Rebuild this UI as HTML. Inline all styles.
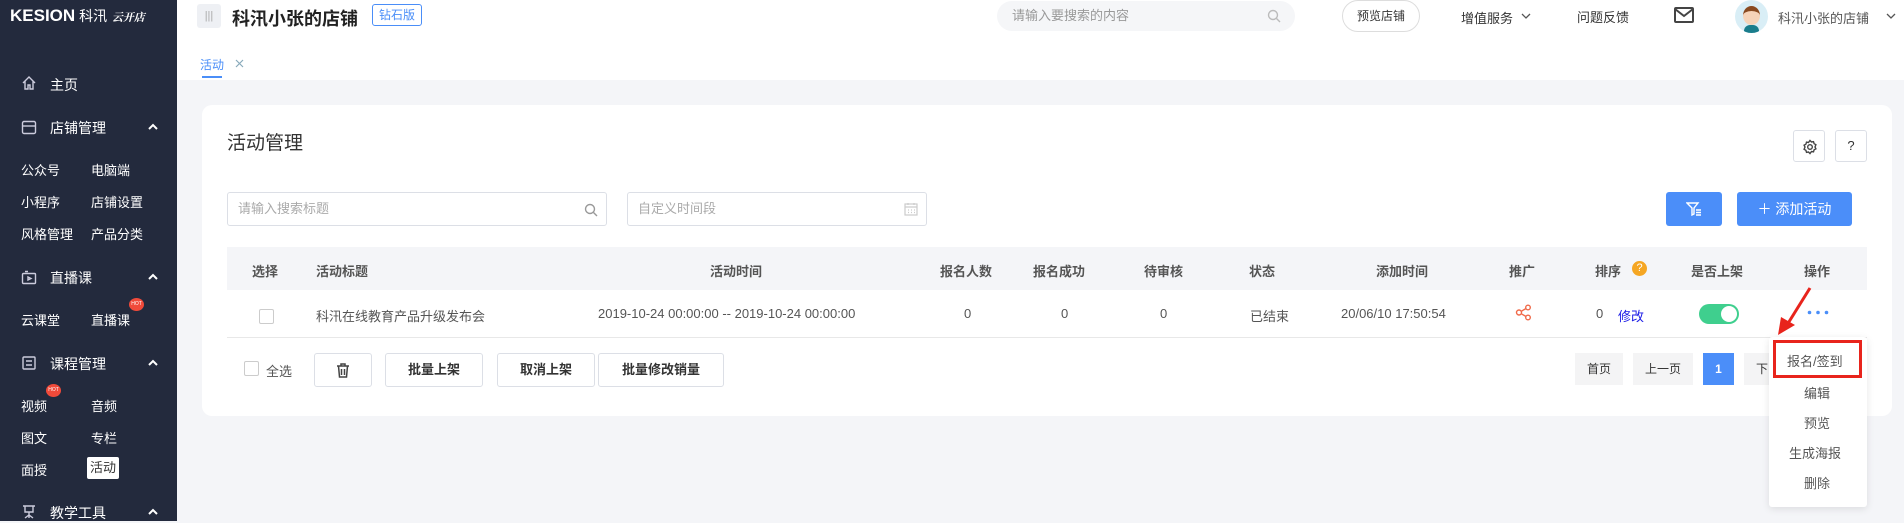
<!DOCTYPE html>
<html><head><meta charset="utf-8"><style>
*{margin:0;padding:0;box-sizing:border-box}
body{width:1904px;height:521px;overflow:hidden;background:#f4f5f8;font-family:"Liberation Sans","Noto Sans CJK SC",sans-serif;font-size:13px;color:#333;position:relative}
.a{position:absolute;white-space:nowrap}
.side{position:absolute;left:0;top:0;width:177px;height:521px;background:#232a3d;color:#fff}
.side .a{color:#fff;font-size:13px}
.hdr{position:absolute;left:177px;top:0;width:1727px;height:45px;background:#fff}
.tabs{position:absolute;left:177px;top:45px;width:1727px;height:35px;background:#fff}
.card{position:absolute;left:202px;top:105px;width:1690px;height:311px;background:#fff;border-radius:10px}
.th{color:#555;font-weight:bold;font-size:13px}
.btn{position:absolute;border:1px solid #dcdfe6;border-radius:3px;background:#fff;text-align:center;font-size:13px;color:#333}
</style></head><body>
<div class="side">
 <div class="a" style="left:10px;top:6px;font-size:17px;font-weight:bold">KESION<span style="font-weight:normal;font-size:14px"> 科汛</span> <span style="font-size:11px;font-style:italic;font-family:'Liberation Serif','Noto Serif CJK SC',serif">云开店</span></div>
 <svg class="a" style="left:21px;top:75px" width="16" height="16" viewBox="0 0 16 16" fill="none" stroke="#ccd" stroke-width="1.4"><path d="M2 8L8 2l6 6M4 6v8h3v-4h2v4h3V6"/></svg>
 <div class="a" style="left:50px;top:75px;font-size:14px">主页</div>
 <svg class="a" style="left:21px;top:120px" width="16" height="15" viewBox="0 0 16 15" fill="none" stroke="#ccd" stroke-width="1.4"><rect x="1.5" y="1.5" width="13" height="12" rx="1.5"/><path d="M1.5 6h13"/></svg>
 <div class="a" style="left:50px;top:118px;font-size:14px">店铺管理</div>
 <svg class="a" style="left:148px;top:123px" width="10" height="7" viewBox="0 0 10 7" fill="none" stroke="#fff" stroke-width="2"><path d="M1 6l4-4 4 4"/></svg>
 <div class="a" style="left:21px;top:160px">公众号</div><div class="a" style="left:91px;top:160px">电脑端</div>
 <div class="a" style="left:21px;top:192px">小程序</div><div class="a" style="left:91px;top:192px">店铺设置</div>
 <div class="a" style="left:21px;top:224px">风格管理</div><div class="a" style="left:91px;top:224px">产品分类</div>
 <svg class="a" style="left:21px;top:270px" width="16" height="15" viewBox="0 0 16 15" fill="none" stroke="#ccd" stroke-width="1.4"><rect x="1.5" y="3.5" width="13" height="10" rx="1"/><path d="M4 1.5h3M7 7l3 1.5L7 10z"/></svg>
 <div class="a" style="left:50px;top:268px;font-size:14px">直播课</div>
 <svg class="a" style="left:148px;top:273px" width="10" height="7" viewBox="0 0 10 7" fill="none" stroke="#fff" stroke-width="2"><path d="M1 6l4-4 4 4"/></svg>
 <div class="a" style="left:21px;top:310px">云课堂</div><div class="a" style="left:91px;top:310px">直播课</div>
 <div class="a" style="left:129px;top:298px;width:15px;height:13px;border-radius:50%;background:#f04a3a;font-size:5px;text-align:center;line-height:13px">HOT</div>
 <svg class="a" style="left:21px;top:355px" width="16" height="16" viewBox="0 0 16 16" fill="none" stroke="#ccd" stroke-width="1.4"><rect x="2" y="2" width="12" height="12" rx="1"/><path d="M5 6h6M5 10h6"/></svg>
 <div class="a" style="left:50px;top:354px;font-size:14px">课程管理</div>
 <svg class="a" style="left:148px;top:359px" width="10" height="7" viewBox="0 0 10 7" fill="none" stroke="#fff" stroke-width="2"><path d="M1 6l4-4 4 4"/></svg>
 <div class="a" style="left:21px;top:396px">视频</div><div class="a" style="left:91px;top:396px">音频</div>
 <div class="a" style="left:46px;top:384px;width:15px;height:13px;border-radius:50%;background:#f04a3a;font-size:5px;text-align:center;line-height:13px">HOT</div>
 <div class="a" style="left:21px;top:428px">图文</div><div class="a" style="left:91px;top:428px">专栏</div>
 <div class="a" style="left:21px;top:460px">面授</div>
 <div class="a" style="left:87px;top:457px;width:32px;height:22px;background:#fff;border-radius:2px;color:#333!important;text-align:center;line-height:22px">活动</div>
 <svg class="a" style="left:21px;top:504px" width="16" height="16" viewBox="0 0 16 16" fill="none" stroke="#ccd" stroke-width="1.4"><path d="M2 2h12M4 2v6h8V2M8 8v6M4 14l4-3 4 3"/></svg>
 <div class="a" style="left:50px;top:503px;font-size:14px">教学工具</div>
 <svg class="a" style="left:148px;top:508px" width="10" height="7" viewBox="0 0 10 7" fill="none" stroke="#fff" stroke-width="2"><path d="M1 6l4-4 4 4"/></svg>
</div>
<div class="hdr">
 <div class="a" style="left:20px;top:4px;width:24px;height:24px;background:#eef0f4;border-radius:3px;color:#aaa;font-size:11px;text-align:center;line-height:24px">|||</div>
 <div class="a" style="left:55px;top:5px;font-size:18px;font-weight:bold;color:#222">科汛小张的店铺</div>
 <div class="a" style="left:195px;top:4px;width:50px;height:22px;border:1px solid #4a8ef8;border-radius:3px;color:#4a8ef8;font-size:12px;text-align:center;line-height:20px">钻石版</div>
 <div class="a" style="left:820px;top:1px;width:298px;height:30px;border-radius:15px;background:#f5f6f8;color:#999;line-height:30px;padding-left:15px">请输入要搜索的内容
  <svg style="position:absolute;right:14px;top:8px" width="14" height="14" viewBox="0 0 14 14" fill="none" stroke="#bbb" stroke-width="1.4"><circle cx="6" cy="6" r="4.5"/><path d="M9.5 9.5L13 13"/></svg></div>
 <div class="a" style="left:1165px;top:0px;width:78px;height:32px;border:1px solid #ddd;border-radius:16px;text-align:center;line-height:30px;font-size:12px">预览店铺</div>
 <div class="a" style="left:1284px;top:8px">增值服务</div>
 <svg class="a" style="left:1344px;top:13px" width="10" height="6" viewBox="0 0 10 6" fill="none" stroke="#555" stroke-width="1.3"><path d="M1 1l4 4 4-4"/></svg>
 <div class="a" style="left:1400px;top:7px">问题反馈</div>
 <svg class="a" style="left:1497px;top:7px" width="20" height="16" viewBox="0 0 20 16" fill="none" stroke="#444" stroke-width="2"><rect x="1" y="1" width="18" height="14" rx="1"/><path d="M1 2l9 7 9-7"/></svg>
 <div class="a" style="left:1558px;top:0px;width:33px;height:33px;border-radius:50%;background:#d9eef6;overflow:hidden"><div style="position:absolute;left:8px;top:6px;width:17px;height:19px;border-radius:50%;background:#f6d3b8;border-top:5px solid #8a4a20"></div><div style="position:absolute;left:9px;top:25px;width:15px;height:8px;background:#1a7d8c;border-radius:6px 6px 0 0"></div></div>
 <div class="a" style="left:1601px;top:8px;color:#555">科汛小张的店铺</div>
 <svg class="a" style="left:1709px;top:13px" width="10" height="6" viewBox="0 0 10 6" fill="none" stroke="#555" stroke-width="1.3"><path d="M1 1l4 4 4-4"/></svg>
</div>
<div class="tabs">
 <div class="a" style="left:23px;top:11px;color:#4a8ef8;font-size:12px">活动</div>
 <svg class="a" style="left:58px;top:14px" width="9" height="9" viewBox="0 0 9 9" stroke="#8ab" stroke-width="1.2"><path d="M1 1l7 7M8 1L1 8"/></svg>
 <div class="a" style="left:25px;top:31px;width:20px;height:2px;background:#4a8ef8"></div>
</div>
<div class="card">
 <div class="a" style="left:25px;top:23px;font-size:19px;color:#333">活动管理</div>
 <div class="btn" style="left:1591px;top:25px;width:32px;height:32px">
  <svg style="position:absolute;left:8px;top:8px" width="16" height="16" viewBox="0 0 16 16" fill="none" stroke="#444" stroke-width="1.4"><path d="M8 1.5l1.5 1.5 2-.3.6 2 1.8 1L13 8l.9 1.8-1.8 1-.6 2-2-.3L8 14.5 6.5 13l-2 .3-.6-2-1.8-1L3 8l-.9-1.8 1.8-1 .6-2 2 .3z"/><circle cx="8" cy="8" r="2.3"/></svg></div>
 <div class="btn" style="left:1633px;top:25px;width:32px;height:32px;line-height:30px">?</div>
 <div class="a" style="left:25px;top:87px;width:380px;height:34px;border:1px solid #dcdfe6;border-radius:3px;color:#aaa;line-height:32px;padding-left:10px">请输入搜索标题
  <svg style="position:absolute;right:8px;top:10px" width="14" height="14" viewBox="0 0 14 14" fill="none" stroke="#999" stroke-width="1.4"><circle cx="6" cy="6" r="4.5"/><path d="M9.5 9.5L13 13"/></svg></div>
 <div class="a" style="left:425px;top:87px;width:300px;height:34px;border:1px solid #dcdfe6;border-radius:3px;color:#aaa;line-height:32px;padding-left:10px">自定义时间段
  <svg style="position:absolute;right:8px;top:9px" width="14" height="14" viewBox="0 0 14 14" fill="none" stroke="#ccc" stroke-width="1.2"><rect x="1" y="2" width="12" height="11"/><path d="M1 5h12M4 1v2M10 1v2M4 8h1M7 8h1M10 8h1M4 10.5h1M7 10.5h1M10 10.5h1"/></svg></div>
 <div class="a" style="left:1464px;top:87px;width:56px;height:34px;background:#4b8ef9;border-radius:3px">
  <svg style="position:absolute;left:20px;top:10px" width="16" height="14" viewBox="0 0 16 14" fill="none" stroke="#fff" stroke-width="1.4"><path d="M1 1h11L8 6v6l-2 1V6z"/><path d="M10 8h5M10 10.5h5M10 13h5"/></svg></div>
 <div class="a" style="left:1535px;top:87px;width:115px;height:34px;background:#4b8ef9;border-radius:3px;color:#fff;text-align:center;line-height:34px;font-size:14px">＋ 添加活动</div>
 <div class="a" style="left:25px;top:142px;width:1640px;height:43px;background:#f4f5f8"></div>
 <div class="a" style="left:25px;top:232px;width:1640px;height:1px;background:#e8e8e8"></div>
</div>
<div style="position:absolute;left:0;top:0;width:1904px">
 <div class="a th" style="left:252px;top:261px">选择</div>
 <div class="a th" style="left:316px;top:261px">活动标题</div>
 <div class="a th" style="left:710px;top:261px">活动时间</div>
 <div class="a th" style="left:940px;top:261px">报名人数</div>
 <div class="a th" style="left:1033px;top:261px">报名成功</div>
 <div class="a th" style="left:1144px;top:261px">待审核</div>
 <div class="a th" style="left:1249px;top:261px">状态</div>
 <div class="a th" style="left:1376px;top:261px">添加时间</div>
 <div class="a th" style="left:1509px;top:261px">推广</div>
 <div class="a th" style="left:1595px;top:261px">排序</div>
 <div class="a" style="left:1632px;top:261px;width:15px;height:15px;border-radius:50%;background:#f5a623;color:#fff;font-size:11px;text-align:center;line-height:15px">?</div>
 <div class="a th" style="left:1691px;top:261px">是否上架</div>
 <div class="a th" style="left:1804px;top:261px">操作</div>
 <div class="a" style="left:259px;top:309px;width:15px;height:15px;border:1px solid #ccc;border-radius:2px"></div>
 <div class="a" style="left:316px;top:306px;color:#555">科汛在线教育产品升级发布会</div>
 <div class="a" style="left:598px;top:306px;color:#555">2019-10-24 00:00:00 -- 2019-10-24 00:00:00</div>
 <div class="a" style="left:964px;top:306px;color:#555">0</div>
 <div class="a" style="left:1061px;top:306px;color:#555">0</div>
 <div class="a" style="left:1160px;top:306px;color:#555">0</div>
 <div class="a" style="left:1250px;top:306px;color:#555">已结束</div>
 <div class="a" style="left:1341px;top:306px;color:#555">20/06/10 17:50:54</div>
 <svg class="a" style="left:1515px;top:304px" width="17" height="17" viewBox="0 0 17 17" fill="none" stroke="#f06a4a" stroke-width="1.4"><circle cx="4" cy="8.5" r="2.5"/><circle cx="13" cy="3.5" r="2.3"/><circle cx="13" cy="13.5" r="2.3"/><path d="M6.2 7.3l4.7-2.7M6.2 9.7l4.7 2.7"/></svg>
 <div class="a" style="left:1596px;top:306px;color:#555">0</div>
 <div class="a" style="left:1618px;top:306px;color:#1a1ae6">修改</div>
 <div class="a" style="left:1699px;top:304px;width:40px;height:20px;border-radius:10px;background:#3fcf8e"><div style="position:absolute;right:2px;top:2px;width:16px;height:16px;border-radius:50%;background:#fff"></div></div>
 <svg class="a" style="left:1807px;top:310px" width="22" height="5"><circle cx="2.5" cy="2.5" r="1.8" fill="#4a8ef8"/><circle cx="11" cy="2.5" r="1.8" fill="#4a8ef8"/><circle cx="19.5" cy="2.5" r="1.8" fill="#4a8ef8"/></svg>
 <div class="a" style="left:244px;top:361px;width:15px;height:15px;border:1px solid #ccc;border-radius:2px"></div>
 <div class="a" style="left:266px;top:361px;color:#555">全选</div>
 <div class="btn" style="left:314px;top:353px;width:58px;height:34px">
  <svg style="position:absolute;left:21px;top:9px" width="14" height="15" viewBox="0 0 14 15" fill="none" stroke="#444" stroke-width="1.5"><path d="M1 3h12M5 3V1h4v2M2.5 3l1 11h7l1-11M5.5 6v6M8.5 6v6"/></svg></div>
 <div class="btn" style="left:385px;top:353px;width:98px;height:34px;line-height:32px;font-weight:bold">批量上架</div>
 <div class="btn" style="left:497px;top:353px;width:98px;height:34px;line-height:32px;font-weight:bold">取消上架</div>
 <div class="btn" style="left:598px;top:353px;width:126px;height:34px;line-height:32px;font-weight:bold">批量修改销量</div>
 <div class="a" style="left:1575px;top:353px;width:48px;height:32px;background:#f4f4f5;text-align:center;line-height:32px;font-size:12px">首页</div>
 <div class="a" style="left:1633px;top:353px;width:60px;height:32px;background:#f4f4f5;text-align:center;line-height:32px;font-size:12px">上一页</div>
 <div class="a" style="left:1703px;top:353px;width:31px;height:32px;background:#4b8ef9;color:#fff;text-align:center;line-height:32px;font-weight:bold;font-size:12px">1</div>
 <div class="a" style="left:1744px;top:353px;width:30px;height:32px;background:#f4f4f5;line-height:32px;padding-left:12px;font-size:12px">下</div>
 <div class="a" style="left:1769px;top:337px;width:98px;height:170px;background:#fff;box-shadow:0 2px 8px rgba(0,0,0,.1);border-radius:3px"></div>
 <div class="a" style="left:1773px;top:340px;width:89px;height:38px;border:3px solid #e8241c"></div>
 <div class="a" style="left:1787px;top:351px;color:#555">报名/签到</div>
 <div class="a" style="left:1804px;top:383px;color:#555">编辑</div>
 <div class="a" style="left:1804px;top:413px;color:#555">预览</div>
 <div class="a" style="left:1789px;top:443px;color:#555">生成海报</div>
 <div class="a" style="left:1804px;top:473px;color:#555">删除</div>
 <svg class="a" style="left:1775px;top:285px" width="40" height="55"><line x1="35" y1="3" x2="12" y2="40" stroke="#e8241c" stroke-width="3"/><polygon points="3,50 6,32 20,40" fill="#e8241c"/></svg>
</div>
</body></html>
